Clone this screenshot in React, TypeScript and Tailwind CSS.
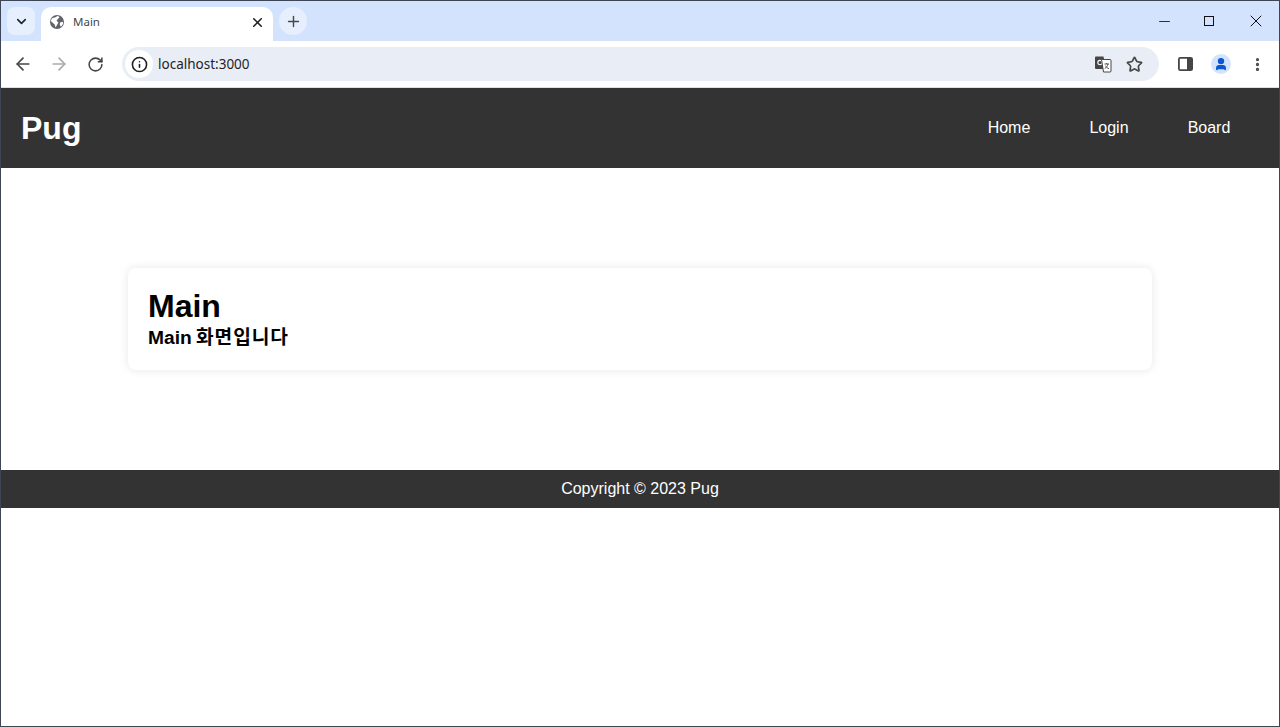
import React from 'react';
import { ArrowLeft, ArrowRight, ChevronDown, Info, Minus, MoreVertical, Plus, RotateCw, Star, User, X } from 'lucide-react';

const BrowserChrome: React.FC = () => (
  <div className="flex flex-col font-['Noto_Sans']">
    {/* tab strip */}
    <div className="h-[40px] bg-[#d3e3fd] flex items-end pl-[6px]">
      <div className="w-[28px] h-[28px] mb-[6px] rounded-lg bg-[#e6effd] flex items-center justify-center">
        <ChevronDown size={15} strokeWidth={2.5} className="text-[#1f1f1f]" />
      </div>
      <div className="w-[232px] h-[34px] ml-[6px] bg-white rounded-t-[10px] flex items-center pl-[8px] pr-[8px] pb-[4px]">
        <svg width="16" height="16" viewBox="0 0 16 16" className="shrink-0">
          <circle cx="8" cy="8" r="7" fill="#5f6368" />
          <path d="M3 4.2 6.5 3.2 8.8 1.8 10.5 3.4 8.8 5 7.6 6.8 9.4 8.4 8 11 6.6 13.6 5.6 10.6 3.4 8.6 1.8 7Z" fill="#fff" />
          <path d="M11 8.4 13.8 7.8 14 10 12 12.8 10.8 11Z" fill="#fff" />
        </svg>
        <span className="ml-[8px] text-[11.5px] text-[#444746] flex-1">Main</span>
        <X size={15} strokeWidth={2.5} className="text-[#1f1f1f] -ml-px" />
      </div>
      <div className="w-[28px] h-[28px] mb-[6px] ml-[6px] rounded-full bg-[#e6effd] flex items-center justify-center">
        <Plus size={17} strokeWidth={2} className="text-[#444746]" />
      </div>
      <div className="flex-1" />
      <div className="self-stretch flex items-center">
        <div className="w-[46px] flex justify-center"><Minus size={17} strokeWidth={1.2} className="text-[#111]" /></div>
        <div className="w-[46px] flex justify-center">
          <svg width="10" height="10" viewBox="0 0 10 10" className="-translate-x-px">
            <rect x="0.5" y="0.5" width="9" height="9" fill="none" stroke="#111" strokeWidth="1" />
          </svg>
        </div>
        <div className="w-[46px] flex justify-center"><X size={20} strokeWidth={1.2} className="text-[#111]" /></div>
      </div>
    </div>
    {/* toolbar */}
    <div className="h-[47px] bg-white flex items-center pl-[4px] pr-[4px] border-b border-[#dcdfe3]">
      <div className="w-[36px] flex justify-center"><ArrowLeft size={20} strokeWidth={2} className="text-[#444746]" /></div>
      <div className="w-[36px] flex justify-center"><ArrowRight size={20} strokeWidth={2} className="text-[#a8abae]" /></div>
      <div className="w-[36px] flex justify-center"><RotateCw size={17} strokeWidth={2.2} className="text-[#444746]" /></div>
      <div className="ml-[9px] w-[1037px] h-[34px] rounded-full bg-[#e9eef6] flex items-center">
        <div className="w-[28px] h-[28px] ml-[3px] rounded-full bg-white flex items-center justify-center">
          <Info size={17} strokeWidth={2.2} className="text-[#1f1f1f]" />
        </div>
        <span className="ml-[5px] text-[13.5px] text-[#1f1f1f] flex-1">localhost:3000</span>
        <svg width="18" height="18" viewBox="0 0 18 18" className="mr-[14px]">
          <path d="M1 2.5 A1 1 0 0 1 2 1.5 H9.5 L12 14 H2 A1 1 0 0 1 1 13Z" fill="#444746" />
          <circle cx="6" cy="7.6" r="2.2" fill="none" stroke="#fff" strokeWidth="1.1" />
          <path d="M7.5 4.5 H16 A1 1 0 0 1 17 5.5 V16 A1 1 0 0 1 16 17 H9.5 Z" fill="#fff" stroke="#444746" strokeWidth="1" />
          <path d="M10.5 9 H15 M12.7 8 V9 M14 9 C13.6 11 12.4 12.6 10.8 13.6 M11.6 10.6 C12.2 12 13.4 13.2 15 13.8" fill="none" stroke="#444746" strokeWidth="0.9" />
        </svg>
        <Star size={17} strokeWidth={2.4} className="text-[#444746] mr-[16px]" />
      </div>
      <div className="ml-[8px] w-[36px] flex justify-center">
        <svg width="15" height="14" viewBox="0 0 15 14">
          <rect x="0.9" y="0.9" width="13.2" height="12.2" rx="1.4" fill="#fff" stroke="#444746" strokeWidth="1.8" />
          <rect x="9" y="0.9" width="5.1" height="12.2" fill="#444746" />
        </svg>
      </div>
      <div className="w-[36px] flex justify-center">
        <div className="w-[20px] h-[20px] rounded-full bg-[#d3e3fd] flex items-center justify-center">
          <User size={14} strokeWidth={3} fill="#0b57d0" className="text-[#0b57d0]" />
        </div>
      </div>
      <div className="w-[36px] flex justify-center"><MoreVertical size={17} strokeWidth={2.6} className="text-[#444746]" /></div>
    </div>
  </div>
);

const navItems = ['Home', 'Login', 'Board'];

const App: React.FC = () => {
  return (
    <div className="h-[727px] overflow-hidden bg-white flex flex-col border border-[#3c4654] font-['Liberation_Sans','Noto_Sans_CJK_KR',sans-serif]">
      <BrowserChrome />

      <header className="h-[80px] bg-[#333333] flex items-center justify-between pl-[20px] pr-[20px] text-white">
        <h1 className="text-[32px] font-bold">Pug</h1>
        <nav className="flex">
          {navItems.map(item => (
            <a key={item} className="w-[100px] text-center text-[16px]">{item}</a>
          ))}
        </nav>
      </header>

      <main className="h-[302px] flex items-center justify-center">
        <div className="w-[1024px] h-[102px] rounded-lg bg-white shadow-[0_0_10px_rgba(0,0,0,0.1)] px-[20px] pt-[20px]">
          <h2 className="text-[32px] font-bold leading-[36px] text-black">Main</h2>
          <p className="text-[19.2px] font-bold leading-[28px] text-black">
            Main <span className="tracking-[0.9px] -ml-px">화면입니다</span>
          </p>
        </div>
      </main>

      <footer className="h-[38px] bg-[#333333] flex items-center justify-center text-white text-[16px]">
        Copyright © 2023 Pug
      </footer>
    </div>
  );
};

export default App;
